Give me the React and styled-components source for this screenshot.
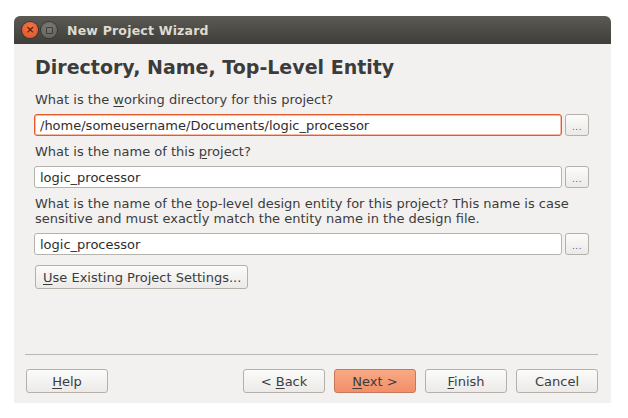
import React from "react";
import styled, { createGlobalStyle } from "styled-components";

const GlobalStyle = createGlobalStyle`
    html, body {
        margin: 0;
        padding: 0;
        background: #ffffff;
        font-family: "DejaVu Sans", "Liberation Sans", sans-serif;
    }
`;

const App = () => {
    return (
        <>
            <GlobalStyle />
            <Window>
                <TitleBar>
                    <CloseButton>×</CloseButton>
                    <MinButton />
                    <WindowTitle>New Project Wizard</WindowTitle>
                </TitleBar>
                <Body>
                    <Heading>Directory, Name, Top-Level Entity</Heading>

                    <Label>
                        What is the <u>w</u>orking directory for this project?
                    </Label>
                    <Row>
                        <Input $focused defaultValue="/home/someusername/Documents/logic_processor" />
                        <Browse>...</Browse>
                    </Row>

                    <Label>
                        What is the name of this <u>p</u>roject?
                    </Label>
                    <Row>
                        <Input defaultValue="logic_processor" />
                        <Browse>...</Browse>
                    </Row>

                    <Label>
                        What is the name of the <u>t</u>op-level design entity for this
                        project? This name is case sensitive and must exactly match the
                        entity name in the design file.
                    </Label>
                    <Row>
                        <Input defaultValue="logic_processor" />
                        <Browse>...</Browse>
                    </Row>

                    <SettingsButton>
                        <u>U</u>se Existing Project Settings...
                    </SettingsButton>
                </Body>
                <Divider />
                <Footer>
                    <Button>
                        <u>H</u>elp
                    </Button>
                    <Spacer />
                    <Button>
                        &lt; <u>B</u>ack
                    </Button>
                    <Button $primary>
                        <u>N</u>ext &gt;
                    </Button>
                    <Button>
                        <u>F</u>inish
                    </Button>
                    <Button>Cancel</Button>
                </Footer>
            </Window>
        </>
    );
};

const Window = styled.div`
    width: 597px;
    height: 387px;
    margin: 16px 0 0 14px;
    background: #f2f1f0;
    border-radius: 6px 6px 0 0;
    display: flex;
    flex-direction: column;
    overflow: hidden;
`;

const TitleBar = styled.div`
    height: 28px;
    flex-shrink: 0;
    background: linear-gradient(#5b5a53, #3e3d39);
    display: flex;
    align-items: center;
    padding-left: 8px;
    gap: 3px;
`;

const CloseButton = styled.div`
    width: 16px;
    height: 16px;
    border-radius: 50%;
    background: radial-gradient(circle at 50% 35%, #f3774a, #e0501f);
    box-shadow: 0 0 0 1px #3a3833;
    color: #5a2412;
    font-size: 11px;
    line-height: 16px;
    text-align: center;
    font-weight: bold;
`;

const MinButton = styled.div`
    width: 16px;
    height: 16px;
    border-radius: 50%;
    background: radial-gradient(circle at 50% 35%, #7d7c76, #5e5d58);
    box-shadow: 0 0 0 1px #3a3833;
    display: flex;
    align-items: center;
    justify-content: center;

    &::after {
        content: "";
        width: 5px;
        height: 5px;
        border: 1px solid #3b3a36;
        border-radius: 1px;
    }
`;

const WindowTitle = styled.div`
    color: #dfdbd2;
    font-weight: bold;
    font-size: 12.5px;
    margin-left: 7px;
    letter-spacing: 0.2px;
`;

const Body = styled.div`
    flex: 1;
    padding: 12px 22px 0 20px;
    display: flex;
    flex-direction: column;
    color: #3c3c3c;
`;

const Heading = styled.h1`
    margin: 0 0 14px 1px;
    font-size: 19px;
    font-weight: bold;
    color: #3c3c3c;
    line-height: 22px;
`;

const Label = styled.div`
    font-size: 13px;
    line-height: 15px;
    margin: 0 0 7px 1px;

    u {
        text-decoration-thickness: 1px;
        text-underline-offset: 2px;
    }
`;

const Row = styled.div`
    display: flex;
    align-items: center;
    gap: 3px;
    margin-bottom: 8px;
`;

const Input = styled.input`
    flex: 1;
    min-width: 0;
    height: 22px;
    box-sizing: border-box;
    border: 1px solid ${(p) => (p.$focused ? "#e65a2b" : "#b5b3ae")};
    box-shadow: ${(p) => (p.$focused ? "inset 0 0 0 0.5px #f07a50" : "none")};
    border-radius: 3px;
    background: #ffffff;
    font-family: inherit;
    font-size: 13px;
    color: #2e2e2e;
    padding: 0 5px;
    outline: none;
`;

const buttonBase = `
    box-sizing: border-box;
    border: 1px solid #b5b1aa;
    border-radius: 3px;
    background: linear-gradient(#fbfbfa, #ebeae8);
    font-family: inherit;
    font-size: 13px;
    color: #3c3c3c;
    padding: 0;

    u {
        text-decoration-thickness: 1px;
        text-underline-offset: 2px;
    }
`;

const Browse = styled.button`
    ${buttonBase}
    width: 24px;
    height: 22px;
    font-size: 9px;
    color: #4a5a8a;
    letter-spacing: 0.5px;
    padding-top: 3px;
`;

const SettingsButton = styled.button`
    ${buttonBase}
    align-self: flex-start;
    margin-left: 1px;
    margin-top: 2px;
    height: 24px;
    padding: 0 6px 0 7px;
`;

const Divider = styled.div`
    height: 1px;
    background: #b9b7b3;
    margin: 0 13px 0 11px;
`;

const Footer = styled.div`
    display: flex;
    align-items: center;
    gap: 9px;
    padding: 14px 13px 10px 12px;
`;

const Spacer = styled.div`
    flex: 1;
`;

const Button = styled.button`
    ${buttonBase}
    width: 82px;
    height: 24px;
    ${(p) =>
        p.$primary &&
        `
        background: linear-gradient(#f9a985, #f18f68);
        border-color: #c8775a;
    `}
`;

export default App;
